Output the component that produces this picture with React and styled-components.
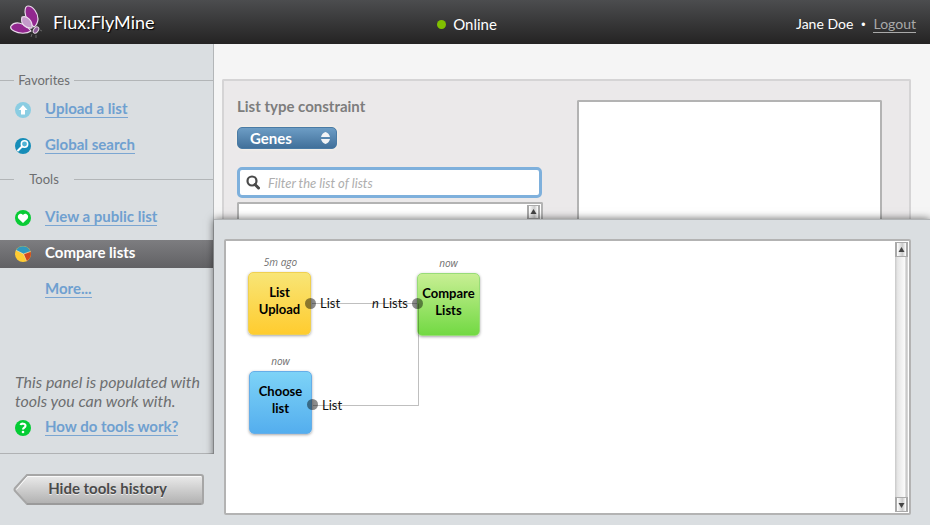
import React from "react";
import styled, { createGlobalStyle, css } from "styled-components";

const GlobalStyle = createGlobalStyle`
  * { box-sizing: border-box; }
  body { margin: 0; background: #f5f5f5; font-family: Lato, "Noto Sans", sans-serif; font-size: 15px; line-height: 20px; color: #6d6e70; }
  button, input, select { font: inherit; }
`;

const Page = styled.div`
  min-height: 100vh;
  display: flex;
  flex-direction: column;
`;

const Header = styled.header`
  height: 44px;
  padding: 0 14px 0 10px;
  display: grid;
  grid-template-columns: 1fr auto 1fr;
  align-items: center;
  color: #fff;
  background: linear-gradient(#4c4d4f, #242323);
`;

const Brand = styled.div`
  display: flex;
  align-items: center;
  gap: 11px;
  font-size: 18px;
  line-height: 24px;
  text-shadow: 1px 1px 1px #000;
`;

const Status = styled.div`
  display: flex;
  align-items: center;
  gap: 7px;
  padding: 4px 0 0 8px;
`;

const StatusDot = styled.span`
  width: 9px;
  height: 9px;
  border-radius: 50%;
  background: #80c000;
`;

const Account = styled.div`
  display: flex;
  align-items: baseline;
  justify-content: flex-end;
  gap: 8px;
  padding-top: 4px;
  font-size: 14px;
`;

const Bullet = styled.span`
  font-family: "Liberation Sans", sans-serif;
  font-size: 12px;
`;

const LogoutLink = styled.a`
  color: #a9a9a9;
  text-decoration: none;
  line-height: 17px;
  border-bottom: 1px solid #a9a9a9;
`;

const Body = styled.div`
  flex: 1;
  display: grid;
  grid-template-columns: 214px 1fr;
`;

const Sidebar = styled.aside`
  display: flex;
  flex-direction: column;
  background: #dadee1;
`;

const ToolPanel = styled.div`
  flex: 1;
  display: flex;
  flex-direction: column;
  padding: 26px 0 11px;
  border-right: 1px solid #b3b6b8;
  border-bottom: 1px solid #b0b2b4;
`;

const GroupTitle = styled.h2`
  margin: 0;
  display: grid;
  grid-template-columns: 14px 60px 1fr;
  align-items: center;
  text-align: center;
  font-size: 13px;
  font-weight: 400;
  line-height: 20px;
  &::before, &::after { content: ""; height: 1px; background: #b2b5b7; }
`;

const ToolList = styled.ul`
  list-style: none;
  margin: 0;
  padding: 6px 0 9px;
  display: grid;
  gap: 8px;
  & + ${GroupTitle} + & { padding-top: 15px; }
`;

const ToolRow = styled.li`
  height: 28px;
  padding: 0 15px 2px;
  display: grid;
  grid-template-columns: 16px 1fr;
  gap: 14px;
  align-items: center;
  ${(p) => p.$active && css`background: linear-gradient(#7d7d80, #616164);`}
`;

const ToolIcon = styled.span`
  display: block;
  height: 15px;
  svg { display: block; }
`;

const ToolLink = styled.a`
  justify-self: start;
  line-height: 17px;
  font-weight: 700;
  color: #6fa0d0;
  text-decoration: none;
  border-bottom: 1px solid #7ba6d2;
  ${(p) => p.$active && css`color: #fff; border-color: transparent;`}
`;

const Note = styled.p`
  margin: auto 8px 0 15px;
  padding-bottom: 4px;
  font-size: 16px;
  line-height: 19px;
  font-style: italic;
`;

const SidebarFooter = styled.div`
  position: relative;
  z-index: 2;
  padding: 20px 10px;
  background: #dadee1;
`;

const ArrowButton = styled.button`
  position: relative;
  display: block;
  margin-left: 3px;
  width: calc(100% - 3px);
  height: 31px;
  padding: 0 2px 3px 0;
  border: 0;
  background: none;
  font-size: 15px;
  font-weight: 700;
  color: #4a4a4a;
  svg { position: absolute; inset: 0; width: 100%; height: 100%; }
  span { position: relative; text-shadow: 0 1px 0 #eee; }
`;

const Main = styled.main`
  display: flex;
  flex-direction: column;
  min-width: 0;
`;

const Constraints = styled.section`
  margin: 35px 19px 0 8px;
  padding: 19px 27px 0 13px;
  display: grid;
  grid-template-columns: 306px 1fr;
  gap: 34px;
  background: #ebe9ea;
  border: 2px solid #d5d4d5;
  border-bottom: 0;
  border-radius: 2px 2px 0 0;
`;

const Field = styled.div`
  display: flex;
  flex-direction: column;
  align-items: flex-start;
`;

const FieldLabel = styled.label`
  margin: -4px 0 11px;
  font-weight: 700;
  color: #7d7d7d;
`;

const SelectWrap = styled.div`
  position: relative;
  width: 100px;
  margin-bottom: 18px;
  svg { position: absolute; right: 7px; top: 5px; pointer-events: none; }
`;

const Select = styled.select`
  display: block;
  width: 100%;
  height: 22px;
  padding: 0 12px 4px;
  appearance: none;
  border: 1px solid #4a7ba5;
  border-radius: 5px;
  background: linear-gradient(#6d9dc5, #41709a);
  box-shadow: 0 0 2px 1px #f5f0e8;
  color: #fff;
  font-weight: 700;
`;

const SearchBox = styled.div`
  width: 305px;
  height: 31px;
  display: flex;
  align-items: center;
  gap: 8px;
  padding: 0 6px;
  background: #fff;
  border: 3px solid #7eb0dc;
  border-radius: 5px;
`;

const SearchInput = styled.input`
  flex: 1;
  min-width: 0;
  border: 0;
  padding: 0;
  outline: 0;
  background: none;
  font-size: 13px;
  font-style: italic;
  &::placeholder { color: #aeaeae; opacity: 1; }
`;

const ResultList = styled.div`
  width: 306px;
  height: 17px;
  margin-top: 4px;
  padding: 1px 1px 0;
  overflow: hidden;
  display: flex;
  justify-content: flex-end;
  background: #fff;
  border: 2px solid #b3b3b3;
  border-bottom: 0;
  border-radius: 2px 2px 0 0;
`;

const Preview = styled.div`
  background: #fff;
  border: 2px solid #b3b3b3;
  border-bottom: 0;
  border-radius: 2px 2px 0 0;
`;

const History = styled.section`
  position: relative;
  z-index: 1;
  flex: 1;
  display: flex;
  padding: 19px 19px 10px 10px;
  background: #dadee1;
  border-top: 1px solid #b0b3b5;
  box-shadow: 0 0 8px rgba(0, 0, 0, 0.6);
`;

const Canvas = styled.div`
  position: relative;
  flex: 1;
  min-height: 276px;
  padding: 1px;
  display: flex;
  justify-content: flex-end;
  background: #fff;
  border: 2px solid #b3b3b3;
  border-radius: 2px;
`;

const Track = styled.div`
  width: 13px;
  display: flex;
  flex-direction: column;
  justify-content: space-between;
  background: linear-gradient(90deg, #c8c8c8, #e6e6e6 20%, #fafafa 75%, #c4c4c4 85%, #ddd);
`;

const TrackButton = styled.button`
  height: 15px;
  padding: 0;
  display: grid;
  place-items: center;
  border: 1px solid #aaa;
  border-width: 1px 2px;
  background: linear-gradient(90deg, #fff, #ccc 60%, #fff);
`;

const Wires = styled.svg`
  position: absolute;
  left: 0;
  top: 0;
  width: 300px;
  height: 200px;
  pointer-events: none;
`;

const tones = {
  yellow: "linear-gradient(#f8e576, #ffcc2f)",
  green: "linear-gradient(#c8ef94, #72d943)",
  blue: "linear-gradient(#7dd3f7, #54aeee)",
};
const edges = { yellow: "#f0d050", green: "#98dc78", blue: "#66aee8" };

const Node = styled.button`
  position: absolute;
  left: ${(p) => p.$x}px;
  top: ${(p) => p.$y}px;
  width: 63px;
  height: 63px;
  padding: 0 0 6px;
  border: 1px solid ${(p) => edges[p.$tone]};
  border-radius: 5px;
  background: ${(p) => tones[p.$tone]};
  box-shadow: 0 1px 3px rgba(0, 0, 0, 0.35);
  color: #000;
  font-size: 13px;
  font-weight: 700;
  line-height: 17px;
`;

const Stamp = styled.time`
  position: absolute;
  left: ${(p) => p.$x}px;
  top: ${(p) => p.$y}px;
  width: 63px;
  text-align: center;
  font: italic 10px/14px "Open Sans", "Noto Sans", sans-serif;
  color: #707070;
`;

const PortLabel = styled.span`
  position: absolute;
  left: ${(p) => p.$x}px;
  top: ${(p) => p.$y}px;
  font-size: 13px;
  line-height: 18px;
  color: #111;
`;

function Butterfly() {
  return (
    <svg width="32" height="34" viewBox="0 0 32 34" aria-hidden="true">
      <g stroke="#eadcec" strokeWidth="1.2" strokeLinejoin="round">
        <path d="M18 1C23 1 28 8 28 14C28 17 26 21 24 22C20 19 15 13 15 7C15 3 16 1 18 1Z" fill="#92278f" />
        <path d="M1 21C5 16 14 17 21 26C17 29 9 29 4 26C2 25 0 23 1 21Z" fill="#92278f" />
        <path d="M12 12C17 10 23 16 22 23C16 24 10 19 12 12Z" fill="#c49aca" />
      </g>
      <ellipse cx="26" cy="25" rx="2.3" ry="3.5" transform="rotate(35 26 25)" fill="#8e5a98" stroke="#e8dde8" />
      <path d="M22 29L21 32M26 30V33M30 25L32 26" stroke="#666" fill="none" />
    </svg>
  );
}

function UpIcon() {
  return (
    <svg width="16" height="16" viewBox="0 0 16 16" aria-hidden="true">
      <circle cx="8" cy="8" r="8" fill="#8bcde2" />
      <path d="M8 3L12.5 8H10V12.5H6V8H3.5Z" fill="#fff" />
    </svg>
  );
}

function GlobeSearchIcon() {
  return (
    <svg width="16" height="16" viewBox="0 0 16 16" aria-hidden="true">
      <circle cx="8" cy="8" r="8" fill="#168db8" />
      <circle cx="9.5" cy="6" r="3.2" fill="#4fb3d5" stroke="#fff" strokeWidth="1.5" />
      <path d="M7 8.5L3 12.5" stroke="#fff" strokeWidth="2" strokeLinecap="round" />
    </svg>
  );
}

function HeartIcon() {
  return (
    <svg width="16" height="16" viewBox="0 0 16 16" aria-hidden="true">
      <circle cx="8" cy="8" r="8" fill="#09cb35" />
      <path d="M8 13L3.5 8.8C1.2 5.5 5.5 2 8 5C10.5 2 14.8 5.5 12.5 8.8Z" fill="#fff" />
    </svg>
  );
}

function PieIcon() {
  return (
    <svg width="16" height="16" viewBox="0 0 16 16" aria-hidden="true">
      <circle cx="8" cy="8" r="8" fill="#ffcc32" />
      <path d="M8.5 8L1 4.2A8 8 0 0 1 15.5 5.5Z" fill="#3198bd" />
      <path d="M8.5 8L15.5 5.5A8 8 0 0 1 11.5 15.2Z" fill="#d2471e" />
      <path d="M1 4.2L8.5 8L15.5 5.5M8.5 8L11.5 15.2" fill="none" stroke="#efe4b8" strokeWidth="0.7" />
    </svg>
  );
}

function HelpIcon() {
  return (
    <svg width="16" height="16" viewBox="0 0 16 16" aria-hidden="true">
      <circle cx="8" cy="8" r="8" fill="#04cc34" />
      <path d="M5.5 5C6 3.2 10.5 3 10.5 5.8C10.5 7.7 8 7.5 8 9.5" fill="none" stroke="#fff" strokeWidth="2.1" />
      <circle cx="8" cy="12" r="1.3" fill="#fff" />
    </svg>
  );
}

function ScrollArrow({ down }) {
  return (
    <svg width="7" height="6" viewBox="0 0 7 6" aria-hidden="true">
      <path d={down ? "M0.5 1H6.5L3.5 6Z" : "M0.5 5H6.5L3.5 0Z"} fill="#444" />
    </svg>
  );
}

function Tool({ icon, label, active, as }) {
  return (
    <ToolRow as={as} $active={active}>
      <ToolIcon>{icon}</ToolIcon>
      <ToolLink href="#" $active={active} aria-current={active ? "page" : undefined}>{label}</ToolLink>
    </ToolRow>
  );
}

export default function App() {
  return (
    <Page>
      <GlobalStyle />
      <Header>
        <Brand><Butterfly />Flux:FlyMine</Brand>
        <Status><StatusDot />Online</Status>
        <Account><span>Jane Doe</span><Bullet>•</Bullet><LogoutLink href="#">Logout</LogoutLink></Account>
      </Header>
      <Body>
        <Sidebar>
          <ToolPanel>
            <GroupTitle>Favorites</GroupTitle>
            <ToolList>
              <Tool icon={<UpIcon />} label="Upload a list" />
              <Tool icon={<GlobeSearchIcon />} label="Global search" />
            </ToolList>
            <GroupTitle>Tools</GroupTitle>
            <ToolList>
              <Tool icon={<HeartIcon />} label="View a public list" />
              <Tool icon={<PieIcon />} label="Compare lists" active />
              <Tool label="More..." />
            </ToolList>
            <Note>This panel is populated with tools you can work with.</Note>
            <Tool as="div" icon={<HelpIcon />} label="How do tools work?" />
          </ToolPanel>
          <SidebarFooter>
            <ArrowButton type="button">
              <svg viewBox="0 0 191 31" preserveAspectRatio="none" aria-hidden="true">
                <defs>
                  <linearGradient id="steel" x1="0" y1="0" x2="0" y2="1">
                    <stop offset="0" stopColor="#ececec" />
                    <stop offset="1" stopColor="#b0b0b0" />
                  </linearGradient>
                </defs>
                <path d="M14 1H188Q190 1 190 3V28Q190 30 188 30H14L2 17Q1 15.5 2 14Z" fill="url(#steel)" stroke="#a6a6a6" strokeWidth="2" />
                <path d="M3.5 15.5L14.5 2.5H188" fill="none" stroke="#fafafa" strokeWidth="1" />
                <path d="M14 30H188" stroke="#8e8e8e" strokeWidth="1" />
              </svg>
              <span>Hide tools history</span>
            </ArrowButton>
          </SidebarFooter>
        </Sidebar>
        <Main>
          <Constraints>
            <Field>
              <FieldLabel htmlFor="type">List type constraint</FieldLabel>
              <SelectWrap>
                <Select id="type" defaultValue="Genes"><option>Genes</option></Select>
                <svg width="9" height="12" viewBox="0 0 9 12" aria-hidden="true">
                  <path d="M0 5Q1 1 4.5 0Q8 1 9 5ZM0 7Q1 11 4.5 12Q8 11 9 7Z" fill="#f2f4f6" />
                </svg>
              </SelectWrap>
              <SearchBox>
                <svg width="14" height="15" viewBox="0 0 14 15" aria-hidden="true">
                  <circle cx="6" cy="6" r="4.5" fill="none" stroke="#4a4a4a" strokeWidth="2.2" />
                  <path d="M9 9.5L12.5 13" stroke="#4a4a4a" strokeWidth="3" strokeLinecap="round" />
                </svg>
                <SearchInput aria-label="Filter the list of lists" placeholder="Filter the list of lists" />
              </SearchBox>
              <ResultList>
                <Track><TrackButton type="button" aria-label="Scroll results up"><ScrollArrow /></TrackButton></Track>
              </ResultList>
            </Field>
            <Preview />
          </Constraints>
          <History>
            <Canvas>
              <Stamp $x={23} $y={14}>5m ago</Stamp>
              <Stamp $x={191} $y={15}>now</Stamp>
              <Stamp $x={23} $y={113}>now</Stamp>
              <Node type="button" $tone="yellow" $x={22} $y={31}>List Upload</Node>
              <Node type="button" $tone="green" $x={191} $y={32}>Compare Lists</Node>
              <Node type="button" $tone="blue" $x={23} $y={130}>Choose list</Node>
              <Wires viewBox="0 0 300 200" aria-hidden="true">
                <path d="M86 62.5H191M87 164.5H192.5V62.5" fill="none" stroke="#000" strokeOpacity="0.25" />
                <g fill="#000" fillOpacity="0.45">
                  <circle cx="84.5" cy="62.5" r="5.5" />
                  <circle cx="191.5" cy="62.5" r="5.5" />
                  <circle cx="86.5" cy="163.5" r="5.5" />
                </g>
              </Wires>
              <PortLabel $x={94} $y={53}>List</PortLabel>
              <PortLabel $x={146} $y={53}><i>n</i> Lists</PortLabel>
              <PortLabel $x={96} $y={155}>List</PortLabel>
              <Track>
                <TrackButton type="button" aria-label="Scroll up"><ScrollArrow /></TrackButton>
                <TrackButton type="button" aria-label="Scroll down"><ScrollArrow down /></TrackButton>
              </Track>
            </Canvas>
          </History>
        </Main>
      </Body>
    </Page>
  );
}
